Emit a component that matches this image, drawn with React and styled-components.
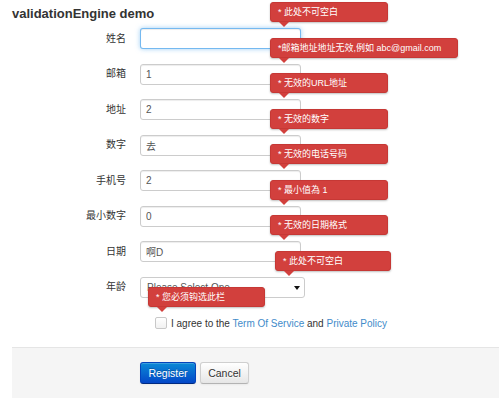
import React from 'react';
import styled, { createGlobalStyle } from 'styled-components';

const GlobalStyle = createGlobalStyle`
  html, body {
    margin: 0;
    padding: 0;
    background: #fff;
    overflow: hidden;
  }
  body {
    font-family: "Liberation Sans", Arial, "Noto Sans CJK SC", sans-serif;
    color: #333;
  }
`;

const Page = styled.div`
  padding-left: 12px;
`;

const Title = styled.h3`
  margin: 0 0 6px;
  padding-top: 5px;
  font-size: 13px;
  line-height: 17px;
  font-weight: bold;
  color: #333;
`;

const FieldRow = styled.div`
  display: grid;
  grid-template-columns: 114px auto;
  column-gap: 14px;
  align-items: center;
  margin-bottom: 14.5px;
`;

const Label = styled.label`
  text-align: right;
  font-size: 10px;
  line-height: 14px;
  color: #333;
`;

const Controls = styled.div`
  position: relative;
  display: flex;
  align-items: center;
  padding-left: ${({ $indent }) => $indent || 0}px;
`;

const TextInput = styled.input`
  box-sizing: border-box;
  width: 161px;
  height: 21px;
  margin: 0;
  padding: 0 5px;
  font-family: "Liberation Sans", Arial, "Noto Sans CJK SC", sans-serif;
  font-size: 10px;
  color: #555;
  background: #fff;
  border: 1px solid ${({ $focused }) => ($focused ? 'rgba(82, 168, 236, 0.8)' : '#ccc')};
  border-radius: 3px;
  box-shadow: ${({ $focused }) =>
    $focused
      ? 'inset 0 1px 1px rgba(0,0,0,.075), 0 0 5px rgba(82,168,236,.55)'
      : 'inset 0 1px 1px rgba(0,0,0,.075)'};
  outline: none;
`;

const SelectWrap = styled.div`
  position: relative;
  width: 165px;
  height: 21px;

  &::after {
    content: '';
    position: absolute;
    right: 5px;
    top: 9px;
    border-left: 3px solid transparent;
    border-right: 3px solid transparent;
    border-top: 4px solid #111;
    pointer-events: none;
  }
`;

const Select = styled.select`
  appearance: none;
  -webkit-appearance: none;
  box-sizing: border-box;
  width: 100%;
  height: 100%;
  margin: 0;
  padding: 0 6px;
  font-family: "Liberation Sans", Arial, "Noto Sans CJK SC", sans-serif;
  font-size: 10px;
  color: #555;
  background: #fff;
  border: 1px solid #ccc;
  border-radius: 3px;
  outline: none;
`;

const Prompt = styled.div`
  position: absolute;
  z-index: 2;
  left: ${({ $left }) => $left}px;
  top: ${({ $top }) => $top}px;
  box-sizing: border-box;
  width: ${({ $width }) => $width || 118}px;
  padding: 3px 7px;
  font-family: "Liberation Sans", Arial, "Noto Sans CJK SC", sans-serif;
  font-size: 9px;
  line-height: 12px;
  white-space: nowrap;
  color: #fff;
  background: #d2403d;
  border: 1px solid #c63835;
  border-radius: 3px;
  box-shadow: 0 1px 2px rgba(0, 0, 0, 0.25);

  &::after {
    content: '';
    position: absolute;
    left: 8px;
    bottom: -6px;
    border-left: 5px solid transparent;
    border-right: 5px solid transparent;
    border-top: 5px solid #d2403d;
  }
`;

const CheckRow = styled(FieldRow)`
  margin-top: 18.5px;
  margin-bottom: 17px;
`;

const CheckLabel = styled.label`
  display: flex;
  align-items: center;
  gap: 4px;
  height: 14px;
  font-size: 10px;
  color: #333;
`;

const CheckBox = styled.input`
  appearance: none;
  -webkit-appearance: none;
  box-sizing: border-box;
  width: 12px;
  height: 12px;
  margin: 0;
  border: 1px solid #c8c8c8;
  border-radius: 2px;
  background: linear-gradient(#fff, #f1f1f1);
`;

const TextLink = styled.a`
  color: #428bca;
  text-decoration: none;
`;

const FormActions = styled.div`
  display: flex;
  gap: 4px;
  padding: 14px 0 14px 128px;
  background: #f5f5f5;
  border-top: 1px solid #e5e5e5;
`;

const Button = styled.button`
  box-sizing: border-box;
  height: 22px;
  width: ${({ $width }) => $width}px;
  margin: 0;
  padding: 0;
  font-family: "Liberation Sans", Arial, sans-serif;
  font-size: 10.5px;
  border-radius: 3px;
  cursor: pointer;
  color: ${({ $primary }) => ($primary ? '#fff' : '#333')};
  text-shadow: ${({ $primary }) =>
    $primary ? '0 -1px 0 rgba(0,0,0,.25)' : '0 1px 1px rgba(255,255,255,.75)'};
  background: ${({ $primary }) =>
    $primary ? 'linear-gradient(#0a8ad6, #0447c8)' : 'linear-gradient(#fff, #e6e6e6)'};
  border: 1px solid ${({ $primary }) => ($primary ? '#0444bb' : '#cfcfcf')};
  border-bottom-color: ${({ $primary }) => ($primary ? '#002a80' : '#b3b3b3')};
  box-shadow: inset 0 1px 0 rgba(255,255,255,.2), 0 1px 2px rgba(0,0,0,.05);
`;

const fields = [
  { label: '姓名', value: '', focused: true, prompt: '* 此处不可空白' },
  { label: '邮箱', value: '1', prompt: '*邮箱地址地址无效,例如 abc@gmail.com', width: 188 },
  { label: '地址', value: '2', prompt: '* 无效的URL地址' },
  { label: '数字', value: '去', prompt: '* 无效的数字' },
  { label: '手机号', value: '2', prompt: '* 无效的电话号码' },
  { label: '最小数字', value: '0', prompt: '* 最小值為 1' },
  { label: '日期', value: '啊D', prompt: '* 无效的日期格式' },
];

const App = () => {
  return (
    <>
      <GlobalStyle />
      <Page>
        <Title>validationEngine demo</Title>
        <form onSubmit={(e) => e.preventDefault()}>
          {fields.map((field) => (
            <FieldRow key={field.label}>
              <Label>{field.label}</Label>
              <Controls>
                <TextInput $focused={field.focused} defaultValue={field.value} />
                <Prompt $left={130} $top={-26} $width={field.width}>
                  {field.prompt}
                </Prompt>
              </Controls>
            </FieldRow>
          ))}

          <FieldRow>
            <Label>年龄</Label>
            <Controls>
              <SelectWrap>
                <Select defaultValue="">
                  <option value="">Please Select One</option>
                </Select>
              </SelectWrap>
              <Prompt $left={135} $top={-26} $width={116}>
                * 此处不可空白
              </Prompt>
            </Controls>
          </FieldRow>

          <CheckRow>
            <span />
            <Controls $indent={15}>
              <CheckLabel>
                <CheckBox type="checkbox" />
                <span>
                  I agree to the <TextLink href="#">Term Of Service</TextLink> and{' '}
                  <TextLink href="#">Private Policy</TextLink>
                </span>
              </CheckLabel>
              <Prompt $left={8} $top={-29} $width={117}>
                * 您必须钩选此栏
              </Prompt>
            </Controls>
          </CheckRow>

          <FormActions>
            <Button $primary $width={56} type="submit">Register</Button>
            <Button $width={49} type="button">Cancel</Button>
          </FormActions>
        </form>
      </Page>
    </>
  );
};

export default App;
